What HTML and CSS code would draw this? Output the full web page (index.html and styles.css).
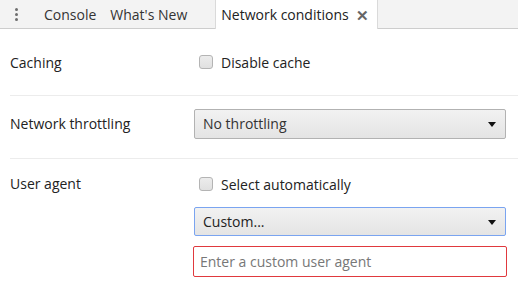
FILE: index.html
```html
<!DOCTYPE html>
<html>
<head>
<title>Network conditions</title>
<link rel="stylesheet" href="styles.css">
</head>
<body>
  <div class="tab-bar">
    <div class="menu-dots">
      <span class="dot"></span><span class="dot"></span><span class="dot"></span>
    </div>
    <div class="tab">Console</div>
    <div class="tab">What's New</div>
    <div class="tab tab-active">Network conditions <span class="tab-close">&#x2715;</span></div>
  </div>

  <div class="panel">
    <div class="row row-caching">
      <div class="label">Caching</div>
      <div class="controls">
        <label class="check"><span class="box"></span>Disable cache</label>
      </div>
    </div>

    <div class="row row-throttle">
      <div class="label">Network throttling</div>
      <div class="controls">
        <div class="select">No throttling<span class="arrow"></span></div>
      </div>
    </div>

    <div class="row row-agent">
      <div class="label">User agent</div>
      <div class="controls">
        <label class="check"><span class="box"></span>Select automatically</label>
        <div class="select select-focus">Custom...<span class="arrow"></span></div>
        <div class="text-input">Enter a custom user agent</div>
      </div>
    </div>
  </div>
</body>
</html>
```

FILE: styles.css
```css
body{
  margin: 0;
  font-family: "Open Sans", "Noto Sans", sans-serif;
  font-size: 14px;
  color: #222;
  background-color: white;
}
.tab-bar{
  display: flex;
  align-items: stretch;
  height: 28px;
  background-color: #f3f3f3;
  border-bottom: 1px solid #cdcdcd;
}
.menu-dots{
  width: 33px;
  display: flex;
  flex-direction: column;
  align-items: center;
  justify-content: center;
  gap: 2px;
}
.dot{
  width: 3px;
  height: 3px;
  border-radius: 50%;
  background-color: #6e6e6e;
}
.tab{
  display: flex;
  align-items: center;
  padding: 0 3px 0 11px;
  color: #333;
}
.tab-active{
  margin-left: 25px;
  padding: 0 8px 0 5px;
  background-color: white;
  border-left: 1px solid #dadada;
  border-right: 1px solid #dadada;
  margin-bottom: -1px;
  color: #222;
}
.tab-close{
  margin-left: 7px;
  font-size: 15px;
  font-weight: bold;
  color: #666;
}
.panel{
  padding: 0 0 0 10px;
}
.row{
  display: flex;
  border-bottom: 1px solid #ececec;
}
.row-caching{
  height: 66px;
  align-items: center;
}
.row-throttle{
  height: 49px;
  padding-top: 13px;
  align-items: flex-start;
}
.row-throttle .label{
  line-height: 30px;
}
.row-agent{
  border-bottom: none;
  padding-top: 16px;
}
.label{
  width: 184px;
}
.controls{
  display: flex;
  flex-direction: column;
  width: 312px;
}
.row-agent .label{
  line-height: 18px;
}
.check{
  display: flex;
  align-items: center;
  height: 18px;
  padding-left: 5px;
}
.box{
  width: 12px;
  height: 12px;
  border: 1px solid #b4b4b4;
  border-radius: 3px;
  background: linear-gradient(#ececec, #e0e0e0);
  margin-right: 8px;
}
.select{
  position: relative;
  box-sizing: border-box;
  height: 30px;
  line-height: 28px;
  padding-left: 8px;
  border: 1px solid #b2b2b2;
  border-radius: 2px;
  background: linear-gradient(#f2f2f2, #e4e4e4);
  color: #333;
}
.select-focus{
  margin-top: 14px;
  height: 29px;
  line-height: 27px;
  border-color: #7aa4f0;
  color: #222;
}
.arrow{
  position: absolute;
  right: 9px;
  top: 12px;
  width: 0;
  height: 0;
  border-left: 4px solid transparent;
  border-right: 4px solid transparent;
  border-top: 5px solid #111;
}
.text-input{
  margin-top: 10px;
  margin-left: -1px;
  width: 314px;
  box-sizing: border-box;
  height: 31px;
  line-height: 29px;
  padding-left: 6px;
  border: 1px solid #e0393e;
  border-radius: 2px;
  color: #777;
}
```
